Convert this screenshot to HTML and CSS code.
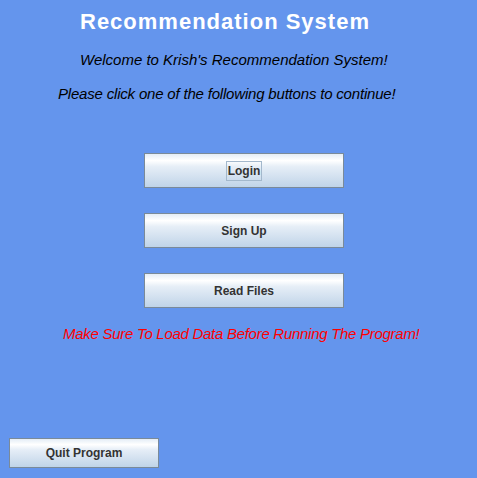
FILE: index.html
```html
<!DOCTYPE html>
<html>
<head>
<meta charset="utf-8">
<title>Recommendation System</title>
<link rel="stylesheet" href="styles.css">
</head>
<body>
<div class="window">
  <h1 class="title">Recommendation System</h1>
  <p class="welcome">Welcome to Krish's Recommendation System!</p>
  <p class="please">Please click one of the following buttons to continue!</p>
  <div class="buttons">
    <button class="btn btn-main"><span class="focus">Login</span></button>
    <button class="btn btn-main"><span>Sign Up</span></button>
    <button class="btn btn-main"><span>Read Files</span></button>
  </div>
  <p class="warning">Make Sure To Load Data Before Running The Program!</p>
  <button class="btn btn-quit"><span>Quit Program</span></button>
</div>
</body>
</html>
```
FILE: styles.css
```css
html, body {
  margin: 0;
  padding: 0;
}
body {
  background: #6495ed;
  width: 477px;
  height: 478px;
  overflow: hidden;
  font-family: "Liberation Sans", Arial, sans-serif;
}
.window {
  display: flex;
  flex-direction: column;
  align-items: flex-start;
  height: 478px;
  box-sizing: border-box;
  padding-top: 9px;
  padding-bottom: 10px;
}
.title {
  margin: 0 0 0 80px;
  font-size: 22px;
  line-height: 26px;
  font-weight: bold;
  letter-spacing: 1px;
  color: #ffffff;
}
.welcome, .please, .warning {
  margin: 0;
  font-size: 15px;
  line-height: 18px;
  font-style: italic;
  color: #000000;
}
.welcome {
  margin: 16px 0 0 80px;
}
.please {
  margin: 16px 0 0 58px;
  letter-spacing: -0.19px;
}
.buttons {
  display: flex;
  flex-direction: column;
  gap: 25px;
  margin: 50px 0 0 144px;
}
.btn {
  display: flex;
  align-items: center;
  justify-content: center;
  box-sizing: border-box;
  padding: 0;
  border: 1px solid #7a8a99;
  background: linear-gradient(to bottom, #e4edf6 0%, #ffffff 20%, #e6eef7 38%, #c0d4e8 100%);
  font-family: "Liberation Sans", Arial, sans-serif;
  font-weight: bold;
  font-size: 12px;
  color: #333333;
}
.btn-main {
  width: 200px;
  height: 35px;
}
.focus {
  border: 1px solid #a3b8cc;
  padding: 2px 1px;
  line-height: 14px;
}
.warning {
  margin: 17px 0 0 63px;
  color: #ff0000;
  letter-spacing: -0.28px;
}
.btn-quit {
  margin: auto 0 0 9px;
  width: 150px;
  height: 30px;
}
```
